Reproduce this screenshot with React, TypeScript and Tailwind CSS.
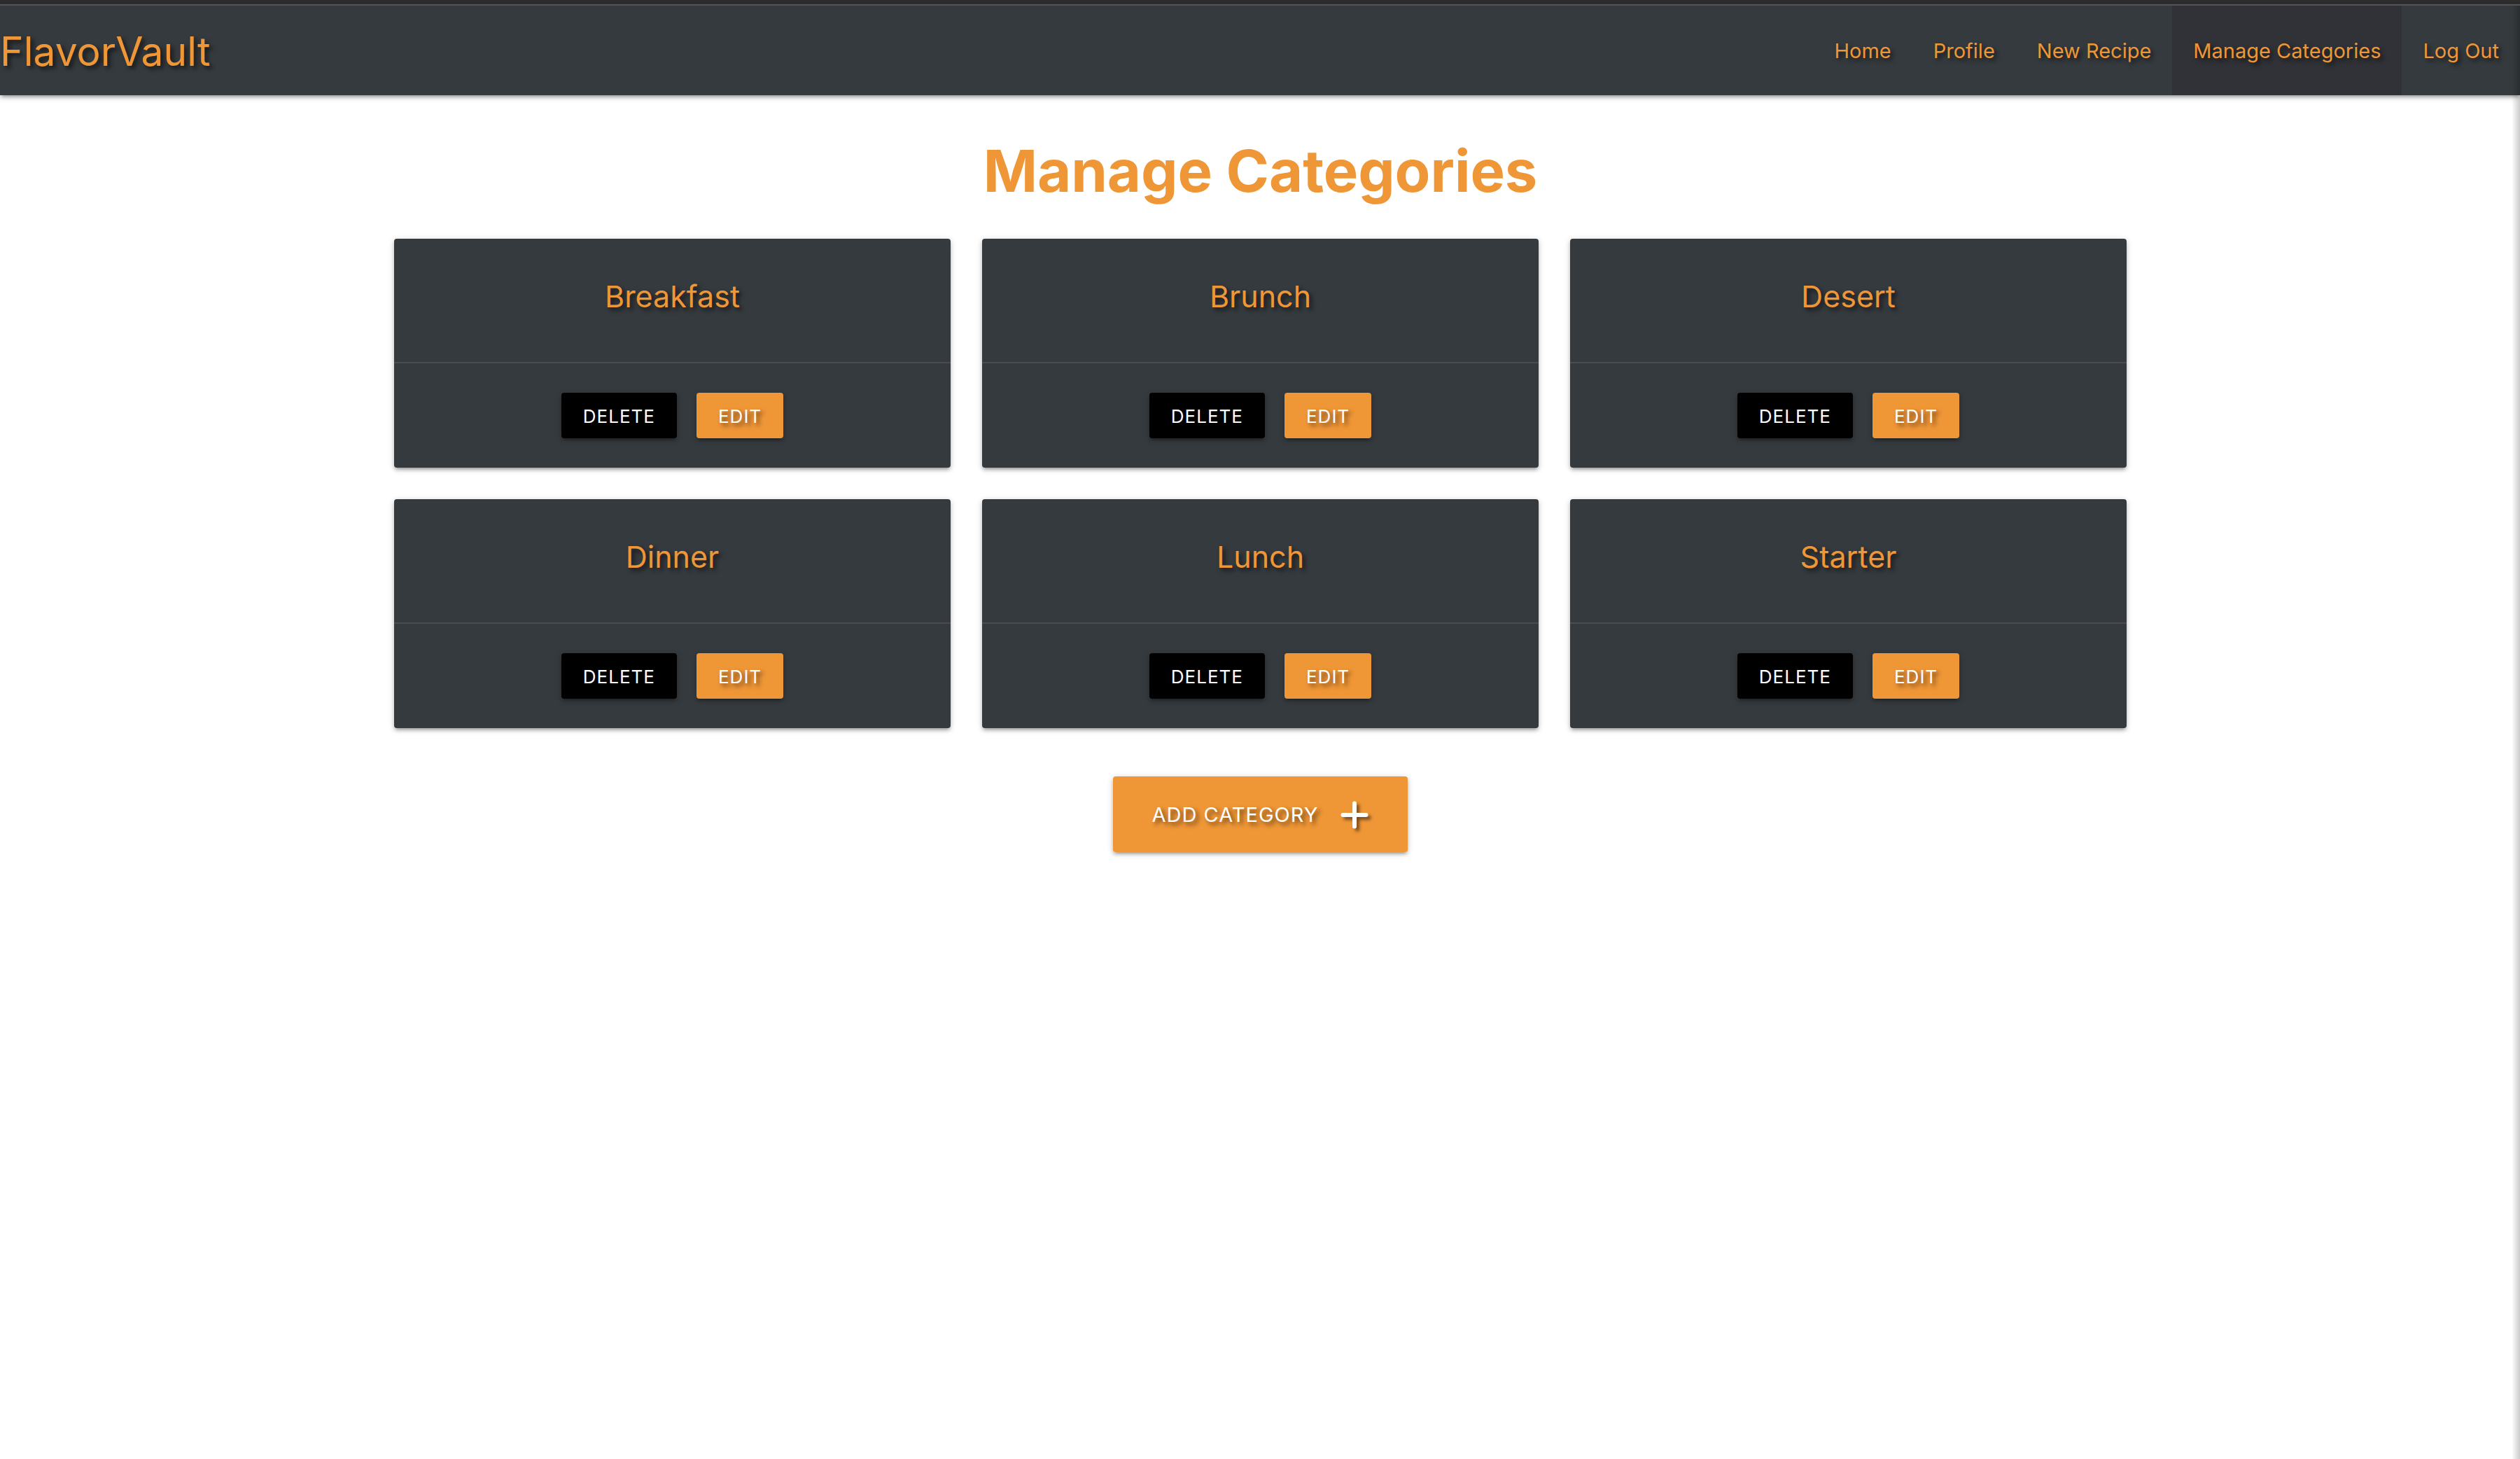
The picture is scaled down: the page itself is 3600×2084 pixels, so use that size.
const links = ["Home", "Profile", "New Recipe", "Manage Categories", "Log Out"];
const categories = ["Breakfast", "Brunch", "Desert", "Dinner", "Lunch", "Starter"];

const DEPTH =
  "shadow-[0_4px_4px_0_rgba(0,0,0,0.14),0_6px_2px_-4px_rgba(0,0,0,0.12),0_2px_10px_0_rgba(0,0,0,0.2)]";
const TEXT_SHADOW = "[text-shadow:4px_4px_6px_rgba(0,0,0,0.6)]";

function NavBar() {
  return (
    <nav className={`relative flex h-32 items-center justify-between bg-[#353a3e] text-[#ef9636] ${DEPTH}`}>
      <a href="#" className={`pt-1 text-[57px] ${TEXT_SHADOW}`}>
        FlavorVault
      </a>
      <ul className="flex h-full">
        {links.map((label) => (
          <li key={label} className={label === "Manage Categories" ? "bg-[#303237]" : ""}>
            <a href="#" className={`flex h-full items-center px-[30px] pt-[2px] text-[29px] ${TEXT_SHADOW}`}>
              {label}
            </a>
          </li>
        ))}
      </ul>
    </nav>
  );
}

function CategoryCard({ name }: { name: string }) {
  return (
    <article className={`rounded-[4px] bg-[#353a3e] text-center ${DEPTH}`}>
      <div className="px-12 pt-[50px] pb-[62px]">
        <h2 className={`text-[43px] leading-[64px] font-normal text-[#ef9636] ${TEXT_SHADOW}`}>{name}</h2>
      </div>
      <div className="flex justify-center gap-7 border-t-2 border-[#4a4c51] pt-[42px] pb-[42px]">
        <button type="button" className={`h-[65px] rounded-[4px] bg-black px-[31px] pt-[2px] text-[26px] tracking-[1px] text-white ${DEPTH}`}>
          DELETE
        </button>
        <button
          type="button"
          className={`h-[65px] rounded-[4px] bg-[#ef9636] px-[31px] pt-[2px] text-[26px] tracking-[1px] text-white ${TEXT_SHADOW} ${DEPTH}`}
        >
          EDIT
        </button>
      </div>
    </article>
  );
}

export default function App() {
  return (
    <div className="relative min-h-screen overflow-hidden bg-white font-['Inter',sans-serif]">
      <div className="h-2 border-b-2 border-[#5a5859] bg-[#2d2d2d]" />
      <NavBar />
      <main className="mx-auto w-[70%] pr-[22px] pb-16 pl-[23px]">
        <h1 className="pt-[58px] pb-[47px] text-center text-[83px] leading-[100px] font-bold text-[#ef9636]">
          Manage Categories
        </h1>
        <div className="grid grid-cols-3 gap-[45px]">
          {categories.map((name) => (
            <CategoryCard key={name} name={name} />
          ))}
        </div>
        <div className="flex justify-center pt-[69px]">
          <button
            type="button"
            className={`flex h-[108px] items-center rounded-[4px] bg-[#ef9636] px-14 pt-[2px] text-[29px] tracking-[1px] text-white ${TEXT_SHADOW} ${DEPTH}`}
          >
            ADD CATEGORY
            <svg
              viewBox="0 0 40 40"
              className="ml-8 size-10 overflow-visible [filter:drop-shadow(4px_4px_2px_rgba(0,0,0,0.5))]"
              fill="none"
              stroke="currentColor"
              strokeWidth="6"
              strokeLinecap="round"
              aria-hidden="true"
            >
              <path d="M20 3.5v33M3.5 20h33" />
            </svg>
          </button>
        </div>
      </main>
      <div className="pointer-events-none absolute top-2 right-0 bottom-0 w-3 bg-linear-to-l from-black/20 to-transparent" />
    </div>
  );
}
